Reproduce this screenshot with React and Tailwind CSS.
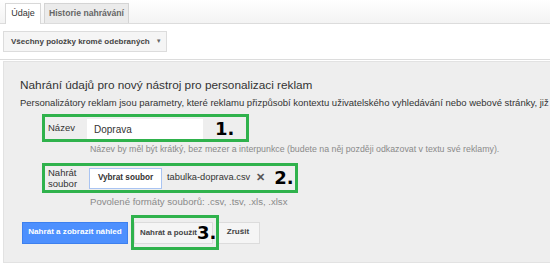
export default function App() {
  const green = "border-[3px] border-[#2fb24c]";
  return (
    <div className="w-[550px] h-[267px] overflow-hidden bg-white font-['Liberation_Sans',Arial,sans-serif] text-[#222]">
      {/* Tabs */}
      <div className="h-[24px] bg-gradient-to-b from-[#ffffff] to-[#f3f3f3] border-b border-[#dcdcdc] flex items-end pl-[5px] gap-[3px]">
        <div className="h-[21px] w-[36px] bg-white border border-b-0 border-[#d8d8d8] flex items-center justify-center text-[9px] text-[#333] -mb-px whitespace-nowrap">
          Údaje
        </div>
        <div className="h-[20px] w-[85px] bg-[#ebebeb] border border-b-0 border-[#d4d4d4] flex items-center justify-center text-[8.6px] font-bold text-[#666] whitespace-nowrap">
          Historie nahrávání
        </div>
      </div>
      {/* Toolbar */}
      <div className="h-[36px] border-b border-[#dcdcdc] flex items-center pl-[3px]">
        <div className="h-[21px] w-[164px] bg-[#f5f5f5] border border-[#dcdcdc] flex items-center pl-[7px] text-[8px] font-bold text-[#444] gap-[6px] whitespace-nowrap">
          <span>Všechny položky kromě odebraných</span>
          <span className="text-[6px] text-[#666]">▼</span>
        </div>
      </div>
      {/* Panel */}
      <div className="ml-[3px] mt-[1px] w-[560px] h-[202px] bg-[#eeeeee] border border-[#e2e2e2] pl-[16px] pt-[15px]">
        <div className="text-[11.8px] text-[#333] leading-[16px] whitespace-nowrap">
          Nahrání údajů pro nový nástroj pro personalizaci reklam
        </div>
        <div className="mt-[4px] text-[9.5px] text-[#333] whitespace-nowrap leading-[12px]">
          Personalizátory reklam jsou parametry, které reklamu přizpůsobí kontextu uživatelského vyhledávání nebo webové stránky, již
        </div>
        {/* Row 1 */}
        <div className={`mt-[5px] ml-[22px] w-[207px] h-[28px] ${green} flex items-start`}>
          <div className="w-[42px] shrink-0 pl-[3px] pt-[4px] text-[9.5px] text-[#333] whitespace-nowrap">Název</div>
          <div className="mt-[2px] w-[116px] shrink-0 h-[20px] bg-white flex items-center pl-[7px] text-[10px] text-[#333]">
            Doprava
          </div>
          <div className="ml-[12px] mt-[1px] text-[18px] font-bold leading-[22px] text-black font-['DejaVu_Sans',sans-serif]">1.</div>
        </div>
        <div className="mt-[2px] ml-[70px] text-[8.8px] text-[#8a8a8a] whitespace-nowrap leading-[11px]">
          Název by měl být krátký, bez mezer a interpunkce (budete na něj později odkazovat v textu své reklamy).
        </div>
        {/* Row 2 */}
        <div className={`mt-[8px] ml-[22px] w-[256px] h-[30px] ${green} flex items-center whitespace-nowrap`}>
          <div className="w-[44px] shrink-0 pl-[3px] text-[9.5px] leading-[11px] text-[#333]">
            Nahrát
            <br />
            soubor
          </div>
          <div className="h-[21px] w-[73px] shrink-0 bg-white border border-[#a9c4f2] flex items-center justify-center text-[8.2px] font-bold text-[#333]">
            Vybrat soubor
          </div>
          <div className="ml-[5px] shrink-0 text-[9.3px] text-[#333]">tabulka-doprava.csv</div>
          <div className="ml-[6px] shrink-0 text-[10.5px] font-bold text-[#555]">✕</div>
          <div className="ml-[9px] shrink-0 text-[18px] font-bold leading-[22px] text-black font-['DejaVu_Sans',sans-serif]">2.</div>
        </div>
        <div className="mt-[3px] ml-[70px] text-[9.6px] text-[#8a8a8a] whitespace-nowrap leading-[12px]">
          Povolené formáty souborů: .csv, .tsv, .xls, .xlsx
        </div>
        {/* Buttons */}
        <div className="mt-[7px] flex items-center whitespace-nowrap">
          <div className="ml-[2px] h-[22px] w-[106px] shrink-0 bg-[#4d90fe] border border-[#3d80ee] flex items-center justify-center text-[8.1px] font-bold text-white">
            Nahrát a zobrazit náhled
          </div>
          <div className={`relative ml-[3px] w-[88px] h-[35px] shrink-0 ${green} flex items-center`}>
            <div className="h-[22px] w-[79px] bg-[#f5f5f5] border border-[#dcdcdc] flex items-center pl-[5px] text-[7.9px] font-bold text-[#444]">
              Nahrát a použít
            </div>
            <div className="absolute left-[63px] top-[4px] text-[18px] font-bold leading-[22px] text-black font-['DejaVu_Sans',sans-serif]">3.</div>
          </div>
          <div className="-ml-[3px] h-[22px] w-[44px] shrink-0 bg-[#f5f5f5] border border-[#dcdcdc] flex items-center justify-center text-[8.1px] font-bold text-[#444]">
            Zrušit
          </div>
        </div>
      </div>
    </div>
  );
}
